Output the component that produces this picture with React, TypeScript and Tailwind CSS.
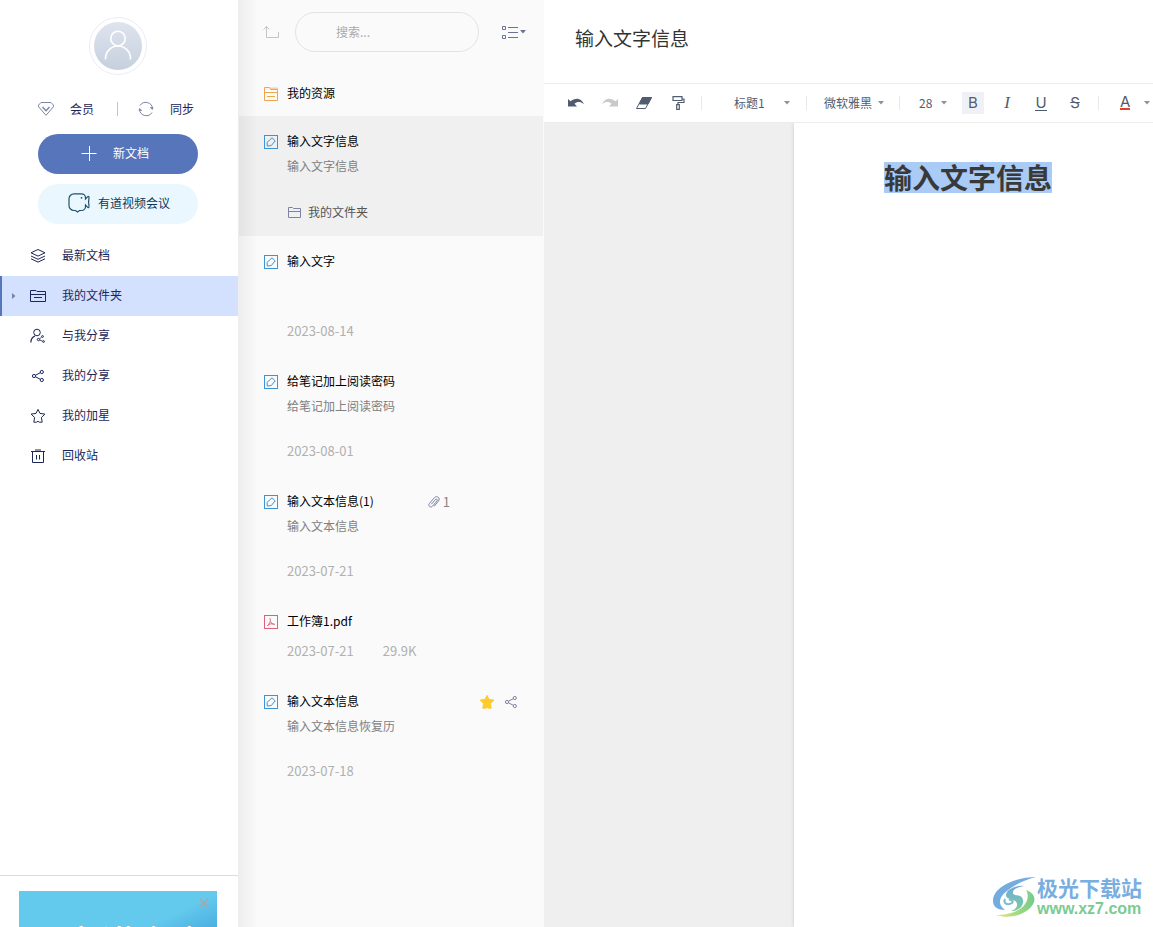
import type { ReactNode } from "react";

type IconProps = { className?: string };

function DiamondIcon({ className }: IconProps) {
  return (
    <svg className={className} width="16" height="16" viewBox="0 0 16 16" fill="none" stroke="currentColor">
      <path d="M3 1.500h10l2.400 2.500v1.800L8 14.300.6 5.800V4z" />
      <path d="M4.500 6L8 9.800 11.500 6" strokeWidth="1.400" />
    </svg>
  );
}

function SyncIcon({ className }: IconProps) {
  return (
    <svg className={className} width="16" height="16" viewBox="0 0 16 16" fill="none" stroke="currentColor">
      <path d="M2 4.500A6.800 6.800 0 0 1 14.500 7.500" />
      <path d="M14 11.500A6.800 6.800 0 0 1 1.500 8.500" />
      <path d="M11.500 6l4 .5-1 2.500zM4.500 10l-4-.5 1-2.500z" fill="currentColor" stroke="none" />
    </svg>
  );
}

function MeetingIcon() {
  return (
    <svg width="24" height="20" viewBox="0 0 24 20" fill="none" stroke="#21506b" strokeWidth="1.200">
      <path d="M6 .8h7.500a4 4 0 0 1 4 4V6l2-2.200c.8-.8 1.800-.2 1.500.8-.3 1.500-.3 7.200 0 8.800.3 1-.7 1.600-1.500.8l-2-2.200v1.500a4 4 0 0 1-4 4h-2L9.500 19l-2-1.500H6a5 5 0 0 1-5-5V5.800a5 5 0 0 1 5-5z" />
      <circle cx="13.500" cy="4.800" r=".9" fill="#21506b" stroke="none" />
    </svg>
  );
}

function LayersIcon() {
  return (
    <svg width="16" height="16" viewBox="0 0 16 16" fill="none" stroke="currentColor">
      <path d="M8 1.500l7 3.300-7 3.300-7-3.300z" />
      <path d="M1 8l7 3.300L15 8M1 10.800l7 3.300 7-3.300" />
    </svg>
  );
}

function FolderIcon() {
  return (
    <svg width="16" height="16" viewBox="0 0 16 16" fill="none" stroke="currentColor">
      <path d="M.5 2.500h5.500l1 1h8.500v10H.5z" />
      <path d="M.5 6.500h15M4 9.500h8" />
    </svg>
  );
}

function SharedWithMeIcon() {
  return (
    <svg width="16" height="16" viewBox="0 0 16 16" fill="none" stroke="currentColor">
      <circle cx="7" cy="4.500" r="3.300" />
      <path d="M.8 14.500c.2-3.500 1.700-5.500 4.200-6.500" strokeWidth="1.200" />
      <circle cx="8.500" cy="11.500" r="1.200" />
      <circle cx="12.500" cy="8.500" r=".9" />
      <circle cx="13.500" cy="13.500" r=".9" />
      <path d="M9.500 11l2.200-2M9.600 12l3 1.200" strokeWidth=".8" />
    </svg>
  );
}

function ShareIcon({ className }: IconProps) {
  return (
    <svg className={className} width="14" height="14" viewBox="0 0 14 14" fill="none" stroke="currentColor">
      <circle cx="3" cy="7" r="1.600" />
      <circle cx="10.800" cy="3" r="1.600" />
      <circle cx="10.800" cy="11" r="1.600" />
      <path d="M4.500 6.200l4.800-2.500M4.500 7.800l4.800 2.500" />
    </svg>
  );
}

function StarIcon({ filled }: { filled?: boolean }) {
  return (
    <svg width="16" height="16" viewBox="0 0 16 16" fill={filled ? "#ffca2c" : "none"} stroke={filled ? "#ffca2c" : "currentColor"} strokeLinejoin="round">
      <path d="M8 1.400l2 4 4.900.7-3.500 3.400.8 4.700H9.500L8 13.300l-1.500.9H3.800l.8-4.700L1.100 6.100 6 5.400z" />
    </svg>
  );
}

function TrashIcon() {
  return (
    <svg width="16" height="16" viewBox="0 0 16 16" fill="none" stroke="currentColor">
      <path d="M1 3.500h14M5 2h6M2.500 3.500v11h11v-11M6.500 7v4.500M9.500 7v4.500" />
    </svg>
  );
}

function NoteIcon() {
  return (
    <svg width="14" height="14" viewBox="0 0 14 14" fill="none" stroke="#3f93d0">
      <rect x=".5" y=".5" width="13" height="13" />
      <path d="M8 2.800l3.200 3.100-3.900 4.600-4 .6-.3-3.600z" />
    </svg>
  );
}

function PdfIcon() {
  return (
    <svg width="14" height="14" viewBox="0 0 14 14" fill="none" stroke="#e0607a">
      <rect x=".5" y=".5" width="13" height="13" />
      <path d="M5.500 3c1.800 1.500.8 4.500-2 7.800M6.500 6.500c.8 2 2.300 2.800 4.500 2.800M3.500 10.500c2-1.800 4-2 6-1.500" />
    </svg>
  );
}

function ResourceIcon() {
  return (
    <svg width="14" height="14" viewBox="0 0 14 14" fill="none" stroke="#eda64c">
      <path d="M.5.5h5l1 2h7v11H.5zM.5 5.500h13M3 9.500h8" />
      <path d="M6.500 1.500H14" strokeWidth="2" opacity=".5" />
    </svg>
  );
}

function Caret({ className }: IconProps) {
  return (
    <svg className={className} width="6" height="4" viewBox="0 0 6 4" fill="currentColor">
      <path d="M0 0h6L3 3.500z" />
    </svg>
  );
}

const navItems = [
  { label: "最新文档", icon: <LayersIcon /> },
  { label: "我的文件夹", icon: <FolderIcon />, active: true },
  { label: "与我分享", icon: <SharedWithMeIcon /> },
  { label: "我的分享", icon: <ShareIcon className="mx-px" /> },
  { label: "我的加星", icon: <StarIcon /> },
  { label: "回收站", icon: <TrashIcon /> },
];

type Note = {
  title: string;
  summary?: string;
  date?: string;
  folder?: string;
  size?: string;
  attachments?: number;
  starred?: boolean;
  pdf?: boolean;
  active?: boolean;
};

const notes: Note[] = [
  { title: "输入文字信息", summary: "输入文字信息", folder: "我的文件夹", active: true },
  { title: "输入文字", date: "2023-08-14" },
  { title: "给笔记加上阅读密码", summary: "给笔记加上阅读密码", date: "2023-08-01" },
  { title: "输入文本信息(1)", summary: "输入文本信息", date: "2023-07-21", attachments: 1 },
  { title: "工作簿1.pdf", date: "2023-07-21", size: "29.9K", pdf: true },
  { title: "输入文本信息", summary: "输入文本信息恢复历", date: "2023-07-18", starred: true },
];

function Sidebar() {
  return (
    <aside className="flex w-[238px] shrink-0 flex-col bg-white text-[#1c2659]">
      <div className="ml-[89px] mt-[17px] flex size-[58px] shrink-0 items-center justify-center rounded-full border border-[#ececf6]">
        <div className="flex size-12 items-center justify-center rounded-full bg-linear-to-b from-[#dfe4ee] to-[#c5d0de]">
          <svg width="28" height="32" viewBox="0 0 28 32" fill="none" stroke="#fff" strokeWidth="1.600">
            <circle cx="14" cy="8.500" r="7.200" />
            <path d="M1.500 29.500v-1a12.500 12.500 0 0 1 25 0v1" />
          </svg>
        </div>
      </div>
      <div className="mt-6 flex h-5 shrink-0 items-center pl-[38px]">
        <DiamondIcon className="text-[#7c83a3]" />
        <a href="#vip" className="ml-4">会员</a>
        <span className="mx-[23px] h-[14px] w-px bg-[#c4c4c4]" />
        <SyncIcon className="-ml-[3px] text-[#7c83a3]" />
        <button className="ml-4">同步</button>
      </div>
      <div className="mt-[15px] flex shrink-0 flex-col gap-[10px] pl-[38px] pr-10">
        <button className="flex h-10 items-center gap-4 rounded-full bg-[#5675bb] pb-[2px] pl-[43px] text-white">
          <svg width="16" height="16" viewBox="0 0 16 16" stroke="#fff">
            <path d="M.5 8.500h15M8.500 1v15" />
          </svg>
          新文档
        </button>
        <button className="flex h-10 items-center gap-[6px] rounded-full bg-[#eaf7fe] pb-[2px] pl-[30px] text-[#0b3a56]">
          <MeetingIcon />
          有道视频会议
        </button>
      </div>
      <nav className="mt-3">
        {navItems.map((item) => (
          <a
            key={item.label}
            href="#nav"
            className={
              item.active
                ? "flex h-10 items-center border-l-2 border-[#5675bb] bg-[#d3e1ff]"
                : "flex h-10 items-center border-l-2 border-transparent"
            }
          >
            <span className="flex w-7 pl-[10px]">
              {item.active && (
                <svg width="4" height="6" viewBox="0 0 4 6" fill="#7c83a3">
                  <path d="M0 0l3.500 3L0 6z" />
                </svg>
              )}
            </span>
            {item.icon}
            <span className="ml-4 pb-[2px]">{item.label}</span>
          </a>
        ))}
      </nav>
      <div className="mt-auto h-[52px] shrink-0 overflow-hidden border-t border-[#dcdcdc] pl-[19px] pr-[21px] pt-[15px]">
        <div className="relative h-24 bg-linear-155 from-[#64caed] from-50% to-[#1f7fca] pt-[30px] text-center text-[36px] leading-[40px] text-white">
          <button aria-label="关闭" className="absolute right-2 top-[7px]">
            <svg width="10" height="10" viewBox="0 0 10 10" stroke="#a3a9ad" strokeWidth="1.800">
              <path d="M.7.7l8.600 8.600M9.300.7L.7 9.300" />
            </svg>
          </button>
          灵文讲高字
        </div>
      </div>
    </aside>
  );
}

function NoteRow({ note }: { note: Note }) {
  const height = note.pdf ? "h-20" : "h-[120px]";
  const bg = note.active ? "bg-black/4" : "";
  return (
    <li className={`${height} ${bg} mx-px flex flex-col pl-[25px] pr-[25px] pt-[15px]`}>
      <div className="flex h-[22px] items-center">
        {note.pdf ? <PdfIcon /> : <NoteIcon />}
        <span className="ml-[9px] pb-[2px] text-black">{note.title}</span>
        {note.attachments && (
          <span className="ml-[53px] flex items-center gap-[2px] text-[13px] text-[#8b8580]">
            <svg width="14" height="14" viewBox="0 0 14 14" fill="none" stroke="#7c83a3" strokeLinecap="round">
              <path d="M4.500 9l4-4.500c1-1.100 2.600.2 1.600 1.400l-4.600 5.300c-2 2-5-.4-3.100-2.700l5-5.800c2.700-2.700 6.500.5 4 3.500l-4 4.800" />
            </svg>
            {note.attachments}
          </span>
        )}
        {note.starred && (
          <span className="ml-auto flex items-center gap-[9px] text-[#7c83a3]">
            <StarIcon filled />
            <ShareIcon />
          </span>
        )}
      </div>
      {note.summary && <p className="ml-[23px] mt-[3px] h-5 text-[#808080]">{note.summary}</p>}
      <div className="mb-[15px] ml-[23px] mt-auto flex h-5 items-center gap-[29px] text-[13px] text-[#b0b0b0]">
        {note.folder && (
          <span className="flex items-center gap-[7px] pl-px pt-[2px] text-xs text-[#555]">
            <svg width="13" height="12" viewBox="0 0 13 12" fill="none" stroke="#7c83a3">
              <path d="M.5 1.500h4l1 1h7v9H.5zM.5 5.500h12" />
            </svg>
            {note.folder}
          </span>
        )}
        {note.date && <span>{note.date}</span>}
        {note.size && <span>{note.size}</span>}
      </div>
    </li>
  );
}

function NoteList() {
  return (
    <section className="w-[306px] shrink-0 bg-[#fafafa] bg-linear-to-r from-[#ededed] to-[#fafafa] to-[20px]">
      <div className="flex h-16 items-center pl-[25px] pr-[18px]">
        <button aria-label="返回上级">
          <svg width="16" height="14" viewBox="0 0 16 14" fill="none" stroke="#c4c4c4">
            <path d="M3.500 1v11.500h12V7M.5 4.500l3-3 3 3" />
          </svg>
        </button>
        <input
          type="text"
          aria-label="搜索"
          placeholder="搜索..."
          className="ml-4 h-10 w-[184px] rounded-full border border-[#e3e3e3] px-10 pb-[2px] placeholder:text-[#aaa]"
        />
        <button aria-label="排序" className="ml-auto flex items-center gap-[2px] text-[#6b7394]">
          <svg width="16" height="14" viewBox="0 0 16 14" fill="none" stroke="currentColor">
            <path d="M.5 1.500h3v3h-3zM.5 10.500h3v3h-3zM6 2.500h10M6 7.500h10M6 12.500h10" />
          </svg>
          <Caret />
        </button>
      </div>
      <div className="flex h-[52px] items-center pl-[26px] pt-2">
        <ResourceIcon />
        <span className="ml-[9px] pb-[2px] text-black">我的资源</span>
      </div>
      <ul>
        {notes.map((note, i) => (
          <NoteRow key={i} note={note} />
        ))}
      </ul>
    </section>
  );
}

function Divider() {
  return <span className="h-[14px] w-px shrink-0 bg-[#e8e8ec]" />;
}

function ToolButton({ label, active, children }: { label: string; active?: boolean; children: ReactNode }) {
  return (
    <button
      aria-label={label}
      className={`flex h-[22px] w-[22px] shrink-0 items-center justify-center ${active ? "bg-[#f0f1f6]" : ""}`}
    >
      {children}
    </button>
  );
}

function ToolSelect({ label, value, className }: { label: string; value: string; className: string }) {
  return (
    <label className={`flex shrink-0 items-center ${className}`}>
      <select aria-label={label} className="w-full appearance-none">
        <option>{value}</option>
      </select>
      <Caret className="shrink-0 text-[#8b90a5]" />
    </label>
  );
}

function Toolbar() {
  return (
    <div className="flex h-10 shrink-0 items-center overflow-hidden border-y border-[#ececec] pl-[21px] text-[#525c70]">
      <div className="flex gap-3">
        <ToolButton label="撤销">
          <svg width="16" height="10" viewBox="0 0 16 10" fill="currentColor">
            <path d="M0 1l2.500 2.200C7-.5 13-.5 16 6c-4-3-7-2.500-9.500-.3L9 8.500H0z" />
          </svg>
        </ToolButton>
        <ToolButton label="重做">
          <svg width="16" height="10" viewBox="0 0 16 10" fill="#c9c9c9">
            <path d="M16 1l-2.500 2.200C9-.5 3-.5 0 6c4-3 7-2.500 9.500-.3L7 8.500h9z" />
          </svg>
        </ToolButton>
        <ToolButton label="清除格式">
          <svg width="16" height="12" viewBox="0 0 16 12" fill="none" stroke="currentColor">
            <path d="M6.500.5h9l-6 11h-9z" />
            <path d="M6.500.5h9L12 7H3.500z" fill="currentColor" />
          </svg>
        </ToolButton>
        <ToolButton label="格式刷">
          <svg width="13" height="14" viewBox="0 0 13 14" fill="none" stroke="currentColor" strokeWidth="1.200">
            <path d="M1 .7h9v3.800H1zM10 3h2v3.500H6V9M4.700 8.700h2.600v4.600H4.700z" />
          </svg>
        </ToolButton>
      </div>
      <span className="w-3 shrink-0" />
      <Divider />
      <ToolSelect label="段落样式" value="标题1" className="ml-8 mr-4 w-14" />
      <Divider />
      <ToolSelect label="字体" value="微软雅黑" className="ml-[17px] mr-[15px] w-[60px]" />
      <Divider />
      <ToolSelect label="字号" value="28" className="ml-[19px] mr-[15px] w-7" />
      <div className="flex gap-3 font-[Inter,sans-serif] text-[15px]">
        <ToolButton label="加粗" active>B</ToolButton>
        <ToolButton label="斜体">
          <i className="font-['Liberation_Serif',serif] text-[17px]">I</i>
        </ToolButton>
        <ToolButton label="下划线">
          <span className="h-[15px] border-b border-current leading-[13px]">U</span>
        </ToolButton>
        <ToolButton label="删除线">
          <s>S</s>
        </ToolButton>
      </div>
      <span className="w-3 shrink-0" />
      <Divider />
      <button aria-label="文字颜色" className="ml-[21px] flex shrink-0 items-center gap-[14px] font-[Inter,sans-serif] text-[15px]">
        <span className="h-[14px] border-b-2 border-[#e0402c] leading-3">A</span>
        <Caret className="text-[#8b90a5]" />
      </button>
    </div>
  );
}

function Watermark() {
  return (
    <div className="absolute bottom-2 right-[11px] flex items-center">
      <svg width="44" height="42" viewBox="0 0 44 42">
        <defs>
          <linearGradient id="wave" x1="0" y1="0" x2="0" y2="1">
            <stop offset="0" stopColor="#6fa9dc" />
            <stop offset="1" stopColor="#7bcf9b" />
          </linearGradient>
          <linearGradient id="tail" x1="0" y1="0" x2="1" y2="0">
            <stop offset="0" stopColor="#e3ea74" />
            <stop offset="1" stopColor="#72cb8c" />
          </linearGradient>
        </defs>
        <path d="M43 1C24 1 0 10 0 25c0 6 5 9 12 9-8-6-6-13 2-19C21 9 31 4 43 1z" fill="#74acdf" />
        <path d="M31 10c-9-1-18 4-18 9 0 6 12 3 11 10 0 3-3 5-6 6 8 0 13-5 12-11-1-7-11-3-10-8 0-3 5-5 11-6z" fill="url(#wave)" />
        <path d="M12 23c-2 4 2 7 7 4 2-2-1-4-3-3" fill="none" stroke="#78bdd0" strokeWidth="2" />
        <path d="M3 39c10 0 24-3 29-11 4-6 3-11 1-14 9 3 11 10 5 17-8 9-23 12-35 8z" fill="url(#tail)" />
      </svg>
      <div className="flex flex-col">
        <span className="text-[21px] font-bold leading-6 text-[#79aee0]">极光下载站</span>
        <span className="font-['Liberation_Sans',sans-serif] text-base font-bold leading-5 text-[#7bcb92]">www.xz7.com</span>
      </div>
    </div>
  );
}

function Editor() {
  return (
    <main className="relative flex min-w-0 flex-1 flex-col bg-white">
      <h1 className="h-[83px] shrink-0 pl-[31px] pt-[23px] text-[19px] leading-[30px] text-[#333]">输入文字信息</h1>
      <Toolbar />
      <div className="flex flex-1 overflow-hidden bg-[#efefef] pl-[250px]">
        <article className="flex-1 bg-white pl-[90px] pt-[39px] shadow-[0_0_4px_rgba(0,0,0,0.15)]">
          <h2 className="text-[28px] font-bold leading-[31px] text-[#393939]">
            <mark className="inline-block bg-[#a9cbf5] text-inherit">输入文字信息</mark>
          </h2>
        </article>
      </div>
      <Watermark />
    </main>
  );
}

export default function App() {
  return (
    <div className="flex h-screen overflow-hidden font-['Noto_Sans_CJK_SC',sans-serif] text-xs leading-5">
      <Sidebar />
      <NoteList />
      <Editor />
    </div>
  );
}
